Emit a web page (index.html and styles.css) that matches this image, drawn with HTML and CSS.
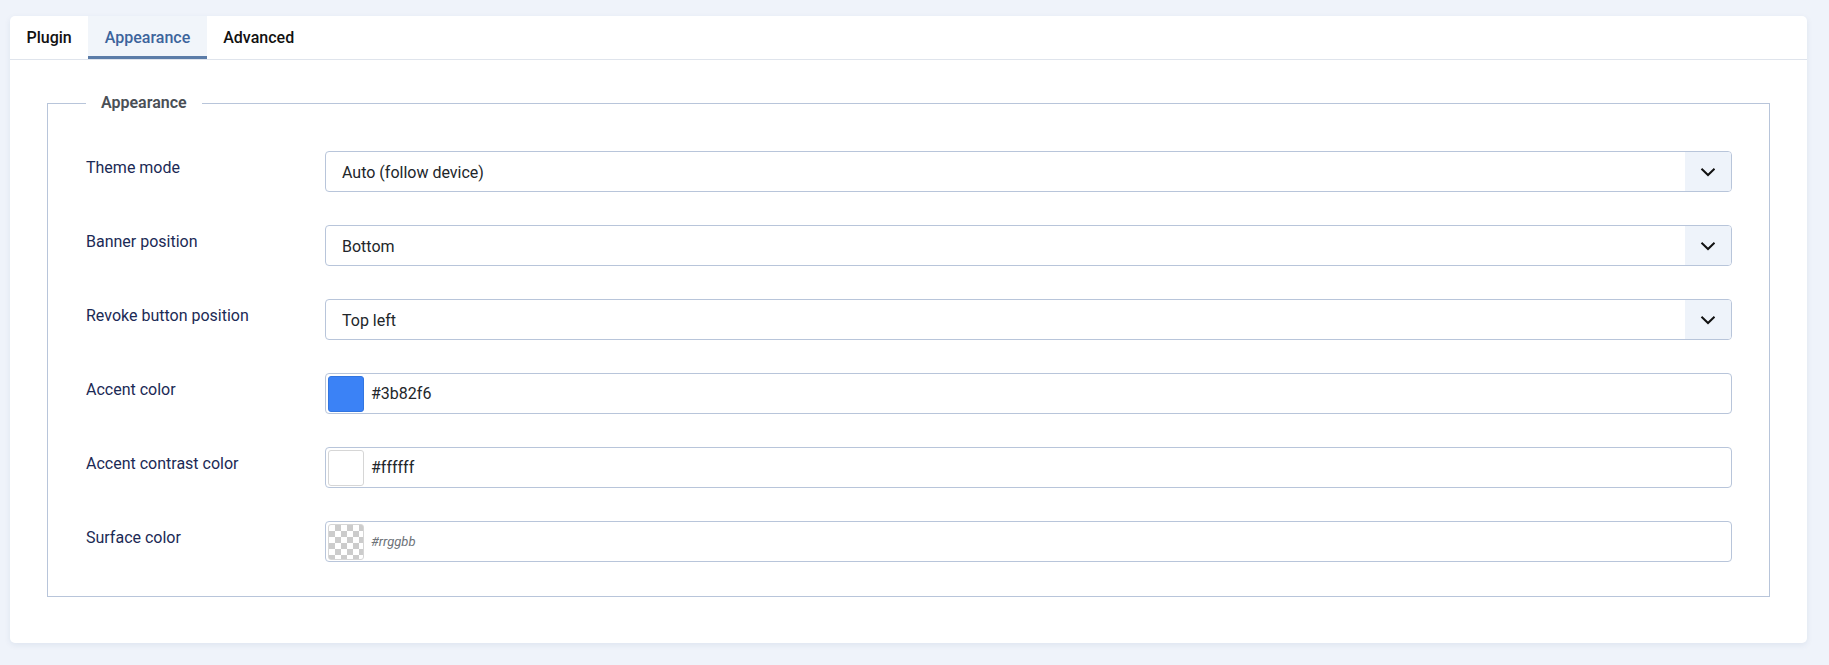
FILE: index.html
```html
<!DOCTYPE html>
<html lang="en">
<head>
<meta charset="utf-8">
<title>Plugin settings</title>
<link rel="stylesheet" href="styles.css">
</head>
<body>
<div class="card">
  <div class="tabs">
    <div class="tab">Plugin</div>
    <div class="tab active">Appearance</div>
    <div class="tab">Advanced</div>
  </div>
  <div class="panel">
    <fieldset class="group">
      <legend class="legend">Appearance</legend>
      <div class="form">
        <label class="label">Theme mode</label>
        <div class="select"><span class="value">Auto (follow device)</span><span class="caret"><svg width="16" height="10" viewBox="0 0 16 10"><path d="M1.5 1.8 L8 8 L14.5 1.8" fill="none" stroke="#111" stroke-width="2"/></svg></span></div>

        <label class="label">Banner position</label>
        <div class="select"><span class="value">Bottom</span><span class="caret"><svg width="16" height="10" viewBox="0 0 16 10"><path d="M1.5 1.8 L8 8 L14.5 1.8" fill="none" stroke="#111" stroke-width="2"/></svg></span></div>

        <label class="label">Revoke button position</label>
        <div class="select"><span class="value">Top left</span><span class="caret"><svg width="16" height="10" viewBox="0 0 16 10"><path d="M1.5 1.8 L8 8 L14.5 1.8" fill="none" stroke="#111" stroke-width="2"/></svg></span></div>

        <label class="label">Accent color</label>
        <div class="color"><span class="swatch blue"></span><span class="value">#3b82f6</span></div>

        <label class="label">Accent contrast color</label>
        <div class="color"><span class="swatch white"></span><span class="value">#ffffff</span></div>

        <label class="label">Surface color</label>
        <div class="color"><span class="swatch checker"></span><span class="placeholder">#rrggbb</span></div>
      </div>
    </fieldset>
  </div>
</div>
</body>
</html>
```

FILE: styles.css
```css
html, body {
  margin: 0;
}
body {
  background: #eff3fa;
  padding: 16px 22px 21px 10px;
  font-family: Roboto, "Liberation Sans", Arial, sans-serif;
  font-size: 16px;
  line-height: 24px;
  color: #22262a;
}
.card {
  background: #fff;
  border-radius: 5px;
  box-shadow: 0 2px 6px rgba(30, 60, 120, 0.08);
}
.tabs {
  display: flex;
  border-bottom: 1px solid #dfe4ec;
}
.tab {
  padding: 10px 16.5px 6px;
  border-bottom: 3px solid transparent;
  font-weight: 500;
  color: #111;
}
.tab.active {
  background: #f1f5fa;
  border-bottom-color: #5b7ca8;
  color: #3c649c;
}
.panel {
  padding: 31px 37px 46px 37px;
}
.group {
  margin: 0;
  border: 1px solid #b8c5da;
  padding: 36px 37px 34px 38px;
  min-width: 0;
}
.legend {
  padding: 0 15px;
  font-weight: 600;
  color: #4a4f56;
  line-height: 24px;
}
.form {
  display: grid;
  grid-template-columns: 239px 1fr;
  row-gap: 33px;
}
.label {
  padding-top: 5px;
  color: #1b2a55;
}
.select, .color {
  height: 41px;
  box-sizing: border-box;
  border: 1px solid #b8c5da;
  border-radius: 4px;
  display: flex;
  align-items: center;
  overflow: hidden;
}
.select .value {
  flex: 1;
  padding-left: 16px;
  padding-top: 2px;
}
.caret {
  width: 46px;
  align-self: stretch;
  background: #eef3fa;
  display: flex;
  align-items: center;
  justify-content: center;
}
.caret svg {
  display: block;
  margin-top: 1px;
}
.color {
  padding: 0 2px;
}
.swatch {
  width: 36px;
  height: 36px;
  border-radius: 3px;
  box-sizing: border-box;
  flex: none;
}
.swatch.blue {
  background: #3b82f6;
  border: 1px solid #3275e0;
}
.swatch.white {
  background: #fff;
  border: 1px solid #d6d6d6;
}
.swatch.checker {
  border: 1px solid #d6d6d6;
  background-color: #fff;
  background-image:
    linear-gradient(45deg, #ccc 25%, transparent 25%, transparent 75%, #ccc 75%),
    linear-gradient(45deg, #ccc 25%, transparent 25%, transparent 75%, #ccc 75%);
  background-size: 12px 12px;
  background-position: 0 0, 6px 6px;
}
.color .value {
  padding-left: 7px;
  padding-top: 1px;
}
.placeholder {
  padding-left: 7px;
  font-size: 13px;
  font-style: italic;
  color: #6d7278;
}
```
